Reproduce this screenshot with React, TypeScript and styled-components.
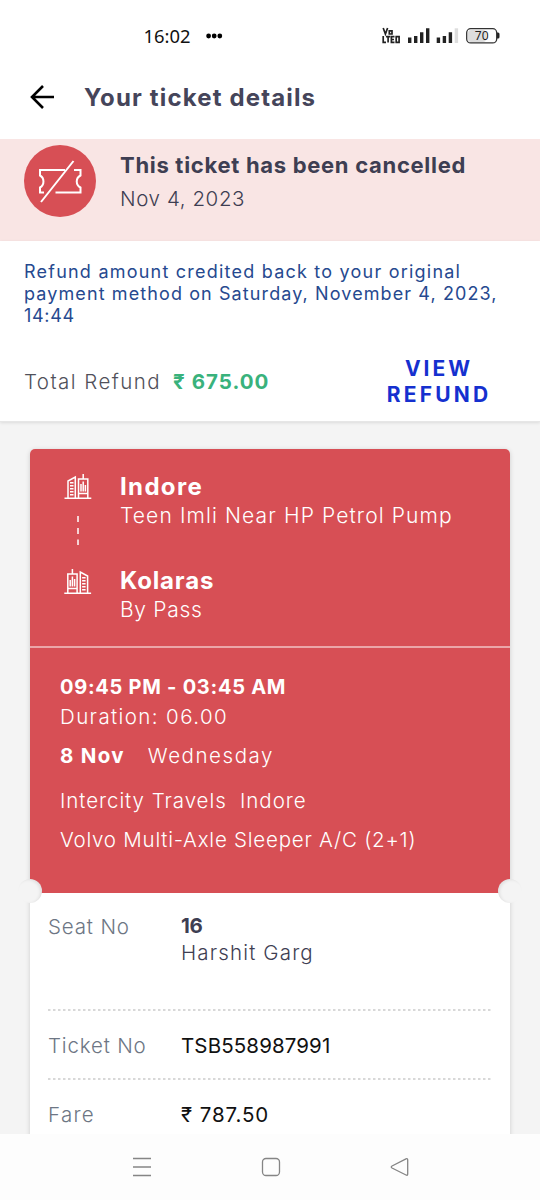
import React from "react";
import styled, { createGlobalStyle } from "styled-components";

const Global = createGlobalStyle`
  * { box-sizing: border-box; }
  body { margin: 0; background: #fff; }
`;

const Screen = styled.div`
  width: 540px;
  height: 1200px;
  overflow: hidden;
  display: flex;
  flex-direction: column;
  background: #fff;
  font-family: Inter, "Open Sans", sans-serif;
  color: #3e3e52;
`;

const Text = styled.span<{ $size: number; $line: number; $weight?: number; $track?: number; $color?: string }>`
  display: block;
  white-space: pre;
  font-size: ${(p) => p.$size}px;
  line-height: ${(p) => p.$line}px;
  font-weight: ${(p) => p.$weight ?? 400};
  letter-spacing: ${(p) => p.$track ?? 0}px;
  color: ${(p) => p.$color ?? "inherit"};
`;

const StatusBar = styled.div`
  height: 72px;
  flex: none;
  display: flex;
  align-items: center;
  padding: 0 40px 0 143.5px;
  color: #111;
`;
const Clock = styled.div`
  font: 400 18.4px/24px "Noto Sans", sans-serif;
  width: 62.5px;
`;
const StatusIcons = styled.svg`
  margin-left: auto;
  display: block;
`;

const Header = styled.header`
  height: 67px;
  flex: none;
  display: flex;
  align-items: flex-start;
  gap: 29px;
  padding: 11px 0 0 29px;
`;
const Title = styled.h1`
  margin: 0;
  font-size: 24px;
  line-height: 30px;
  font-weight: 650;
  letter-spacing: 1.15px;
  color: #45455a;
`;
const BackIcon = styled.svg`
  display: block;
`;

const Banner = styled.section`
  height: 102px;
  flex: none;
  display: flex;
  gap: 24px;
  padding: 6px 24px 0;
  background: #f9e5e4;
`;
const BannerText = styled.div`
  padding-top: 3px;
`;

const Refund = styled.section`
  height: 181px;
  flex: none;
  padding: 20px 24px 0;
  background: #fff;
  border-bottom: 1px solid #e6e6e6;
  box-shadow: 0 1px 3px rgba(0, 0, 0, 0.1);
  position: relative;
`;
const RefundRow = styled.div`
  display: flex;
  align-items: center;
  margin-top: 28px;
`;
const Amount = styled.div`
  margin-left: 12px;
`;
const ViewRefund = styled.button`
  border: 0;
  background: none;
  font-family: inherit;
  padding: 1px 0 0;
  margin: 0 24px 0 auto;
  width: 106px;
  display: flex;
  flex-direction: column;
  align-items: center;
`;

const Body = styled.main`
  flex: 1;
  min-height: 0;
  overflow: hidden;
  background: #f4f4f4;
  padding: 27px 30px 0;
`;
const Ticket = styled.article`
  height: 700px;
  position: relative;
  border-radius: 5px;
  background: #fff;
  box-shadow: 0 1px 5px rgba(0, 0, 0, 0.16);
`;
const Trip = styled.div`
  height: 444px;
  background: #d74f55;
  color: #fff;
  border-radius: 5px 5px 0 0;
`;
const Route = styled.div`
  height: 199px;
  display: flex;
  gap: 28px;
  padding: 24px 34px 0;
  border-bottom: 2px solid #eba6a8;
`;
const RouteIcons = styled.div`
  display: flex;
  flex-direction: column;
  width: 28px;
`;
const Dashes = styled.svg`
  display: block;
  margin: 15px 0 23px;
`;
const Stop = styled.div`
  height: 94px;
`;
const Journey = styled.div`
  padding: 24px 30px 0;
`;
const DateRow = styled.div`
  display: flex;
  gap: 23px;
  margin: 8px 0 13px;
`;
const Notch = styled.i<{ $right?: boolean }>`
  position: absolute;
  top: 430px;
  ${(p) => (p.$right ? "right: -12px;" : "left: -12px;")}
  width: 24px;
  height: 24px;
  border-radius: 50%;
  background: #f4f4f4;
  box-shadow: inset ${(p) => (p.$right ? "2px" : "-2px")} 1px 3px rgba(0, 0, 0, 0.08);
`;
const Details = styled.div`
  padding: 0 18px;
`;
const DetailRow = styled.div<{ $height: number }>`
  height: ${(p) => p.$height}px;
  padding-top: 20px;
  display: grid;
  grid-template-columns: 133px 1fr;
`;
const DottedRule = styled.svg`
  display: block;
  width: 100%;
  height: 2px;
`;

const NavBar = styled.nav`
  height: 66px;
  flex: none;
  background: #fdfdfd;
  display: flex;
  gap: 106px;
  padding: 22px 0 0 130px;
`;

const CancelledIcon = () => (
  <svg width="72" height="72" viewBox="0 0 72 72" fill="none" stroke="#fff" strokeWidth="2">
    <circle cx="36" cy="36" r="36" fill="#d74f55" stroke="none" />
    <path d="M41 25H16V30.5C20.6 33 20.6 40 16 42.5V47.5H20M31.5 47.5H56.5V42.5C51.5 40 51.5 33 56.5 30.5V25H50M17 57L49.5 16" />
  </svg>
);

const City = ({ flip }: { flip?: boolean }) => (
  <svg width="28" height="27" viewBox="0 0 28 27" fill="none" stroke="#fff" strokeWidth="1.5">
    <g transform={flip ? "translate(27.6 0) scale(-1 1)" : undefined}>
      <path d="M4 25V8L11.3 4V25M6 9.7H9.5M6 12.7H9.5M6 15.7H9.5M6 18.7H9.5M6 21.7H9.5" />
      <path d="M0.5 25.3H27.3M14.5 25V6H23.8V25M19.2 6V1M14.5 20.5H23.8M17 18.5V11M19.2 18.5V8.5M21.4 18.5V12" />
    </g>
  </svg>
);

const Divider = () => (
  <DottedRule>
    <path d="M0 1H443" stroke="#ccc" strokeWidth="1.5" strokeDasharray="2.5 2.5" />
  </DottedRule>
);

const GREY = "#6d7684";
const BLUE = "#1530cf";

export default function App() {
  return (
    <Screen>
      <Global />
      <StatusBar>
        <Clock>16:02</Clock>
        <svg width="18" height="6" viewBox="0 0 18 6">
          <circle cx="2.6" cy="3" r="2.4" />
          <circle cx="8.2" cy="3" r="2.4" />
          <circle cx="13.8" cy="3" r="2.4" />
        </svg>
        <StatusIcons width="118" height="20" viewBox="0 0 118 20">
          <g fill="none" stroke="#222" strokeWidth="1.7">
            <path d="M1.2 2L3.4 8L5.6 2M7.3 4.8H10V8H7.3ZM1.2 10V16.3H4M4 10.7H8.2M6.1 10.7V16.5M12.5 10.7H9.4V16.3H12.5M9.4 13.5H12M14.2 10.7H17.1V16.3H14.2Z" />
          </g>
          <g fill="#222">
            <path d="M26 11.5h3.4V17H26zM32 10h3.4v7H32zM38 6.3h3.4V17H38zM44 2.3h3.4V17H44zM54.7 11.5h3.4V17h-3.4zM60.7 10h3.4v7h-3.4zM66.7 6.3h3.4V17h-3.4z" />
            <path d="M72.7 2.3h3.4V17h-3.4z" fill="#ddd" />
            <path d="M115 6.5h1q1.5 0 1.5 1.5v3q0 1.5-1.5 1.5h-1z" />
          </g>
          <rect x="86" y="4" width="18" height="12" rx="3" fill="#ddd" />
          <rect x="84.7" y="2.7" width="30" height="14.2" rx="4" fill="none" stroke="#333" strokeWidth="1.3" />
          <text x="99.7" y="14.2" textAnchor="middle" fontFamily="Noto Sans, sans-serif" fontSize="12" fill="#222">70</text>
        </StatusIcons>
      </StatusBar>
      <Header>
        <BackIcon width="26" height="28" viewBox="0 0 26 28" fill="none" stroke="#000" strokeWidth="2.6">
          <path d="M25 14H3M14 3L3 14L14 25" />
        </BackIcon>
        <Title>Your ticket details</Title>
      </Header>
      <Banner>
        <CancelledIcon />
        <BannerText>
          <Text $size={22} $line={34} $weight={700} $track={0.7}>This ticket has been cancelled</Text>
          <Text $size={20.5} $line={33} $weight={350} $track={0.6}>Nov 4, 2023</Text>
        </BannerText>
      </Banner>
      <Refund>
        <Text $size={18} $line={22} $weight={370} $track={1.22} $color="#26498f">Refund amount credited back to your original</Text>
        <Text $size={18} $line={22} $weight={370} $track={1.1} $color="#26498f">payment method on Saturday, November 4, 2023,</Text>
        <Text $size={18} $line={22} $weight={370} $track={0.7} $color="#26498f">14:44</Text>
        <RefundRow>
          <Text $size={20.5} $line={26} $weight={350} $track={1.43} $color="#50505a">Total Refund</Text>
          <Amount>
            <Text $size={20.5} $line={26} $weight={700} $track={1.05} $color="#39b27c">₹ 675.00</Text>
          </Amount>
          <ViewRefund>
            <Text $size={21} $line={26} $weight={700} $track={3} $color={BLUE}>VIEW</Text>
            <Text $size={21} $line={26} $weight={700} $track={3.2} $color={BLUE}>REFUND</Text>
          </ViewRefund>
        </RefundRow>
      </Refund>
      <Body>
        <Ticket>
          <Trip>
            <Route>
              <RouteIcons>
                <City />
                <Dashes width="28" height="30" viewBox="0 0 28 30" stroke="#f6d3d4" strokeWidth="2">
                  <path d="M14 1V7M14 13V19M14 24.5V30" />
                </Dashes>
                <City flip />
              </RouteIcons>
              <div>
                <Stop>
                  <Text $size={24} $line={27} $weight={700} $track={1.35}>Indore</Text>
                  <Text $size={21} $line={31} $weight={320} $track={1.12}>Teen Imli Near HP Petrol Pump</Text>
                </Stop>
                <Stop>
                  <Text $size={24} $line={28} $weight={700} $track={0.85}>Kolaras</Text>
                  <Text $size={21} $line={30} $weight={320} $track={0.7}>By Pass</Text>
                </Stop>
              </div>
            </Route>
            <Journey>
              <Text $size={20} $line={30} $weight={700} $track={0.73}>09:45 PM - 03:45 AM</Text>
              <Text $size={20.5} $line={30} $weight={320} $track={1.4}>Duration: 06.00</Text>
              <DateRow>
                <Text $size={20.5} $line={32} $weight={700} $track={1.3}>8 Nov</Text>
                <Text $size={20.5} $line={32} $weight={320} $track={1.55}>Wednesday</Text>
              </DateRow>
              <Text $size={20.5} $line={31} $weight={320} $track={0.94}>{"Intercity Travels  Indore"}</Text>
              <Text $size={20.5} $line={47} $weight={320} $track={0.77}>Volvo Multi-Axle Sleeper A/C (2+1)</Text>
            </Journey>
          </Trip>
          <Details>
            <DetailRow $height={116}>
              <Text $size={20.5} $line={27} $track={0.85} $weight={330} $color={GREY}>Seat No</Text>
              <div>
                <Text $size={20.5} $line={26} $weight={700} $track={-0.3}>16</Text>
                <Text $size={20.5} $line={28} $weight={350} $track={1.15}>Harshit Garg</Text>
              </div>
            </DetailRow>
            <Divider />
            <DetailRow $height={67}>
              <Text $size={20.5} $line={30} $track={0.82} $weight={330} $color={GREY}>Ticket No</Text>
              <Text $size={20.5} $line={30} $weight={370} $track={0.12} $color="#111">TSB558987991</Text>
            </DetailRow>
            <Divider />
            <DetailRow $height={67}>
              <Text $size={20.5} $line={30} $track={1.3} $weight={330} $color={GREY}>Fare</Text>
              <Text $size={20.5} $line={30} $weight={370} $track={0.9} $color="#111">₹ 787.50</Text>
            </DetailRow>
          </Details>
          <Notch />
          <Notch $right />
        </Ticket>
      </Body>
      <NavBar>
        <svg width="24" height="22" viewBox="0 0 24 22" stroke="#858585" strokeWidth="1.3">
          <path d="M3 2.5H21M3 11H21M3 19.5H21" />
        </svg>
        <svg width="22" height="22" viewBox="0 0 22 22" fill="none" stroke="#858585" strokeWidth="1.3">
          <rect x="2.5" y="2.5" width="17" height="17" rx="3.5" />
        </svg>
        <svg width="22" height="22" viewBox="0 0 22 22" fill="none" stroke="#858585" strokeWidth="1.3" strokeLinejoin="round">
          <path d="M4 10L18 2.8Q19.7 2.2 19.7 4V18Q19.7 19.8 18 19L4 12Q2.5 11 4 10Z" />
        </svg>
      </NavBar>
    </Screen>
  );
}
